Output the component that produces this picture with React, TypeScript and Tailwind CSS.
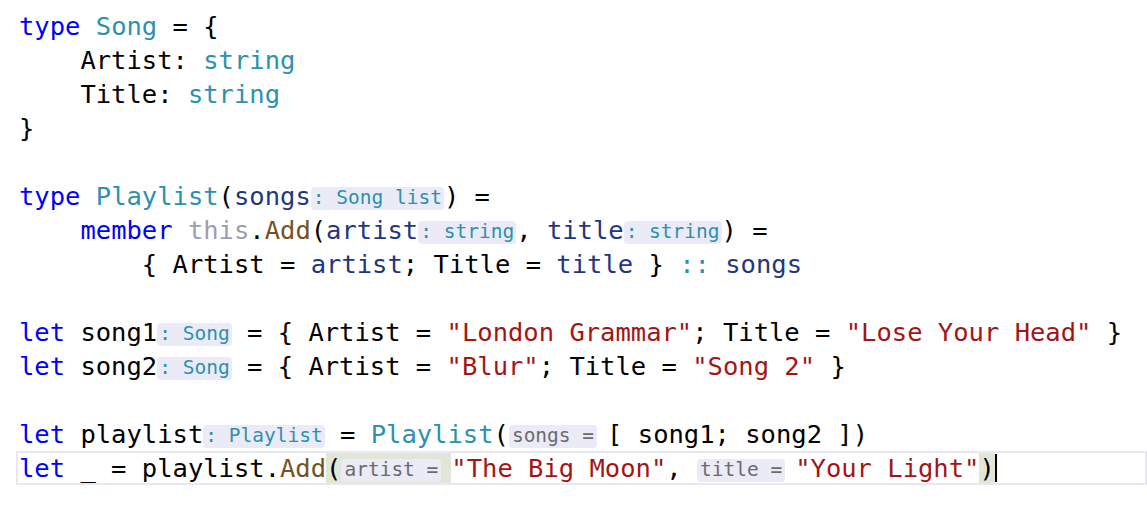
import React from 'react';

type Kind = 'kw' | 'ty' | 'pa' | 'st' | 'me' | 'se' | 'op' | 'tx';

const colors: Record<Kind, string> = {
  kw: 'text-[#0000ff]',
  ty: 'text-[#2b91af]',
  pa: 'text-[#1f377f]',
  st: 'text-[#a31515]',
  me: 'text-[#74531f]',
  se: 'text-[#9d9db0]',
  op: 'text-[#2b91af]',
  tx: 'text-black',
};

const C: React.FC<{ k?: Kind; children: React.ReactNode }> = ({ k = 'tx', children }) => (
  <span className={`whitespace-pre ${colors[k]}`}>{children}</span>
);

// type hints (": string") and parameter name hints ("artist =")
const TypeHint: React.FC<{ children: React.ReactNode }> = ({ children }) => (
  <span className="inline-flex h-[23px] items-center rounded-[4px] bg-[#ebebf7] px-[2px] text-[19.5px] text-[#2b91af] whitespace-pre translate-y-[2px]">
    {children}
  </span>
);

const ParamHint: React.FC<{ children: React.ReactNode }> = ({ children }) => (
  <span className="mr-[10px] inline-flex h-[23px] items-center rounded-[4px] bg-[#ebebf7] px-[3px] text-[19.5px] text-[#6b6b6b] whitespace-pre translate-y-[2px]">
    {children}
  </span>
);

const Line: React.FC<{ children?: React.ReactNode; current?: boolean }> = ({ children, current }) => (
  <div
    className={`flex h-[34px] items-center pl-[3px] ${
      current ? 'ring-2 ring-inset ring-[#e8e8f0]' : ''
    }`}
  >
    {children}
  </div>
);

export default function App() {
  return (
    <div className="h-[510px] w-[1147px] overflow-hidden bg-white pl-[16px] pt-[9px] font-['DejaVu_Sans_Mono',monospace] text-[25.5px]">
      <Line>
        <C k="kw">type</C>
        <C> </C>
        <C k="ty">Song</C>
        <C>{' = {'}</C>
      </Line>
      <Line>
        <C>{'    Artist: '}</C>
        <C k="ty">string</C>
      </Line>
      <Line>
        <C>{'    Title: '}</C>
        <C k="ty">string</C>
      </Line>
      <Line>
        <C>{'}'}</C>
      </Line>
      <Line />
      <Line>
        <C k="kw">type</C>
        <C> </C>
        <C k="ty">Playlist</C>
        <C>(</C>
        <C k="pa">songs</C>
        <TypeHint>: Song list</TypeHint>
        <C>{') ='}</C>
      </Line>
      <Line>
        <C>{'    '}</C>
        <C k="kw">member</C>
        <C> </C>
        <C k="se">this</C>
        <C>.</C>
        <C k="me">Add</C>
        <C>(</C>
        <C k="pa">artist</C>
        <TypeHint>: string</TypeHint>
        <C>{', '}</C>
        <C k="pa">title</C>
        <TypeHint>: string</TypeHint>
        <C>{') ='}</C>
      </Line>
      <Line>
        <C>{'        { Artist = '}</C>
        <C k="pa">artist</C>
        <C>{'; Title = '}</C>
        <C k="pa">title</C>
        <C>{' } '}</C>
        <C k="op">::</C>
        <C> </C>
        <C k="pa">songs</C>
      </Line>
      <Line />
      <Line>
        <C k="kw">let</C>
        <C>{' song1'}</C>
        <TypeHint>: Song</TypeHint>
        <C>{' = { Artist = '}</C>
        <C k="st">"London Grammar"</C>
        <C>{'; Title = '}</C>
        <C k="st">"Lose Your Head"</C>
        <C>{' }'}</C>
      </Line>
      <Line>
        <C k="kw">let</C>
        <C>{' song2'}</C>
        <TypeHint>: Song</TypeHint>
        <C>{' = { Artist = '}</C>
        <C k="st">"Blur"</C>
        <C>{'; Title = '}</C>
        <C k="st">"Song 2"</C>
        <C>{' }'}</C>
      </Line>
      <Line />
      <Line>
        <C k="kw">let</C>
        <C>{' playlist'}</C>
        <TypeHint>: Playlist</TypeHint>
        <C>{' = '}</C>
        <C k="ty">Playlist</C>
        <C>(</C>
        <ParamHint>songs =</ParamHint>
        <C>{'[ song1; song2 ])'}</C>
      </Line>
      <Line current>
        <C k="kw">let</C>
        <C>{' _ = playlist.'}</C>
        <C k="me">Add</C>
        <span className="my-[2px] flex items-center self-stretch bg-[#e2e6d6]">
          <C>(</C>
          <ParamHint>artist =</ParamHint>
        </span>
        <C k="st">"The Big Moon"</C>
        <C>{', '}</C>
        <ParamHint>title =</ParamHint>
        <C k="st">"Your Light"</C>
        <span className="my-[2px] flex items-center self-stretch bg-[#e2e6d6]">
          <C>)</C>
        </span>
        <span className="h-[28px] w-[2px] bg-black" />
      </Line>
    </div>
  );
}
